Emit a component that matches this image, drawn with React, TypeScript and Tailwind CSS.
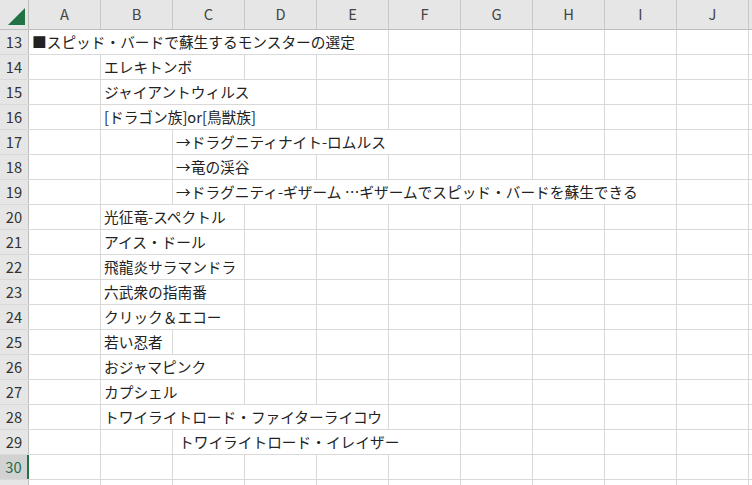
const COLS = ['A', 'B', 'C', 'D', 'E', 'F', 'G', 'H', 'I', 'J'];

type Row = {
    n: number;
    start?: number;
    span?: number;
    text?: string;
    indent?: boolean;
    hideLabel?: boolean;
};

// start = column index, span = how many columns the text runs over
const rows: Row[] = [
    { n: 13, start: 0, span: 5, text: '■スピッド・バードで蘇生するモンスターの選定' },
    { n: 14, start: 1, span: 2, text: 'エレキトンボ' },
    { n: 15, start: 1, span: 3, text: 'ジャイアントウィルス' },
    { n: 16, start: 1, span: 3, text: '[ドラゴン族]or[鳥獣族]' },
    { n: 17, start: 2, span: 4, text: '→ドラグニティナイト-ロムルス' },
    { n: 18, start: 2, span: 2, text: '→竜の渓谷' },
    { n: 19, start: 2, span: 7, text: '→ドラグニティ-ギザーム …ギザームでスピッド・バードを蘇生できる' },
    { n: 20, start: 1, span: 2, text: '光征竜-スペクトル' },
    { n: 21, start: 1, span: 2, text: 'アイス・ドール' },
    { n: 22, start: 1, span: 2, text: '飛龍炎サラマンドラ' },
    { n: 23, start: 1, span: 2, text: '六武衆の指南番' },
    { n: 24, start: 1, span: 2, text: 'クリック＆エコー' },
    { n: 25, start: 1, span: 1, text: '若い忍者' },
    { n: 26, start: 1, span: 2, text: 'おジャマピンク' },
    { n: 27, start: 1, span: 2, text: 'カプシェル' },
    { n: 28, start: 1, span: 4, text: 'トワイライトロード・ファイターライコウ' },
    { n: 29, start: 2, span: 4, text: 'トワイライトロード・イレイザー', indent: true },
    { n: 30 },
    { n: 31, hideLabel: true },
];

const font = { fontFamily: '"Noto Sans CJK JP", "Noto Sans", sans-serif' };

function Cell({ span = 1, text, indent }: { span?: number; text?: string; indent?: boolean }) {
    return (
        <div
            className={`h-full shrink-0 border-r border-[#d9d9d9] flex items-center whitespace-nowrap text-[14.7px] leading-none text-[#222222] ${indent ? 'pl-[6px]' : 'pl-[3px]'}`}
            style={{ width: span * 72 }}
        >
            {text}
        </div>
    );
}

function SheetRow({ row }: { row: Row }) {
    const selected = row.n === 30;
    const cells = [];
    let i = 0;
    while (i < COLS.length) {
        if (row.text && i === row.start) {
            cells.push(<Cell key={i} span={row.span} text={row.text} indent={row.indent} />);
            i += row.span ?? 1;
        } else {
            cells.push(<Cell key={i} />);
            i += 1;
        }
    }
    return (
        <div className="flex h-[25px] border-b border-[#d9d9d9]">
            <div
                className={`w-[29px] shrink-0 h-full flex items-center justify-center text-[14.7px] leading-none ${
                    selected
                        ? 'bg-[#d2d2d2] text-[#1e6b45] border-r-2 border-[#217346]'
                        : 'bg-[#e6e6e6] text-[#333333] border-r border-[#bdbdbd]'
                }`}
            >
                {row.hideLabel ? '' : row.n}
            </div>
            {cells}
            <div className="w-[40px] shrink-0 h-full" />
        </div>
    );
}

export default function App() {
    return (
        <div className="w-[752px] h-[485px] overflow-hidden bg-white" style={font}>
            {/* column headers */}
            <div className="flex h-[30px] bg-[#e6e6e6] border-b border-[#bdbdbd]">
                <div className="w-[29px] shrink-0 h-full border-r border-[#bdbdbd] relative">
                    <svg className="absolute left-[8px] top-[8px]" width="17" height="17" viewBox="0 0 17 17">
                        <polygon points="0,17 17,17 17,0" fill="#217346" />
                    </svg>
                </div>
                {COLS.map((c) => (
                    <div
                        key={c}
                        className="w-[72px] shrink-0 h-full border-r border-[#c8c8c8] flex items-center justify-center text-[14.7px] leading-none text-[#444444]"
                    >
                        {c}
                    </div>
                ))}
                <div className="w-[40px] shrink-0 h-full" />
            </div>
            {rows.map((r) => (
                <SheetRow key={r.n} row={r} />
            ))}
        </div>
    );
}
